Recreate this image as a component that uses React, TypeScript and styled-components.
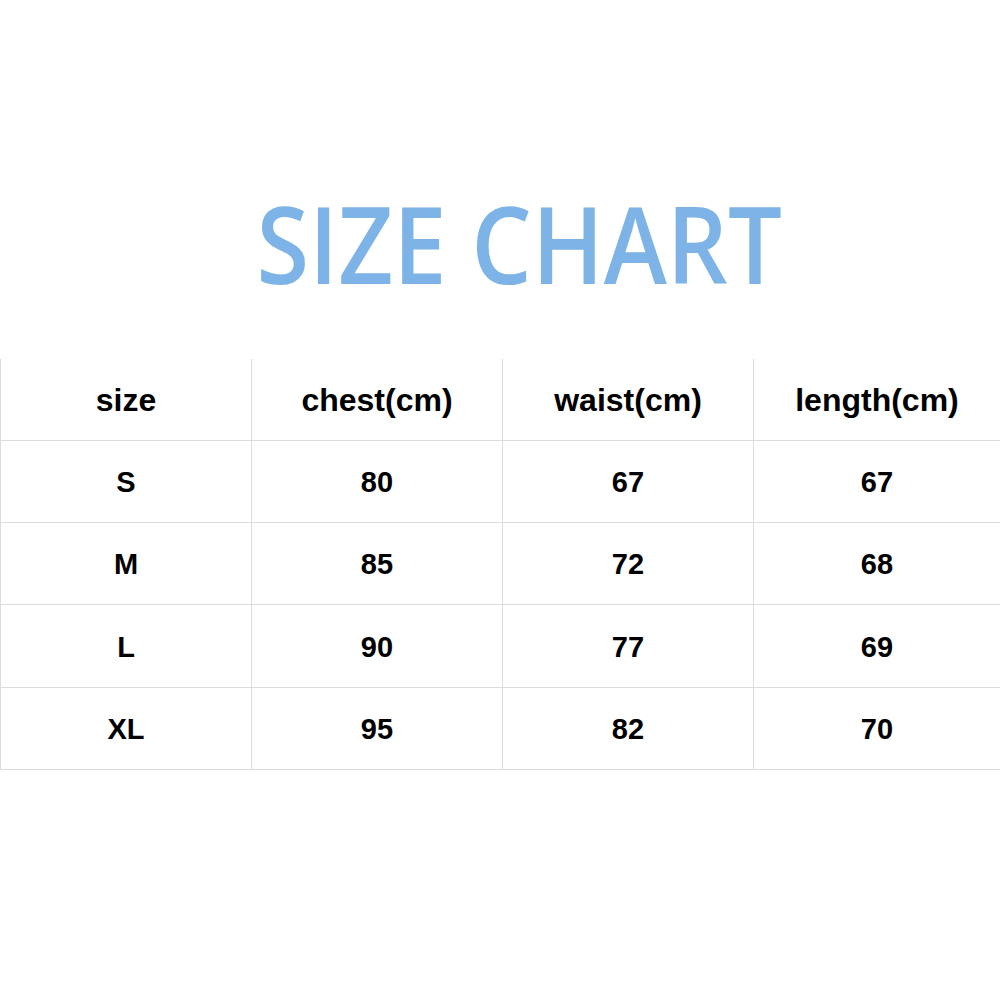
import styled, { createGlobalStyle } from "styled-components";

const GlobalStyle = createGlobalStyle`
  html, body {
    margin: 0;
    padding: 0;
    background: #ffffff;
  }
`;

type SizeRow = {
  size: string;
  chest: string;
  waist: string;
  length: string;
};

const rows: SizeRow[] = [
  { size: "S", chest: "80", waist: "67", length: "67" },
  { size: "M", chest: "85", waist: "72", length: "68" },
  { size: "L", chest: "90", waist: "77", length: "69" },
  { size: "XL", chest: "95", waist: "82", length: "70" },
];

const headers = ["size", "chest(cm)", "waist(cm)", "length(cm)"];

export default function App() {
  return (
    <>
      <GlobalStyle />
      <Page>
        <TitleBox>
          <Title>SIZE CHART</Title>
        </TitleBox>
        <Table>
          {headers.map((h) => (
            <Cell key={h} head>
              {h}
            </Cell>
          ))}
          {rows.map((r) => (
            <Row key={r.size} row={r} />
          ))}
        </Table>
      </Page>
    </>
  );
}

const Row = ({ row }: { row: SizeRow }) => (
  <>
    <Cell>{row.size}</Cell>
    <Cell>{row.chest}</Cell>
    <Cell>{row.waist}</Cell>
    <Cell>{row.length}</Cell>
  </>
);

const Page = styled.div`
  width: 1000px;
  height: 1000px;
  display: flex;
  flex-direction: column;
`;

const TitleBox = styled.div`
  height: 359px;
  box-sizing: border-box;
  padding: 189px 0 0 38px;
  display: flex;
  justify-content: center;
`;

const Title = styled.h1`
  margin: 0;
  font-family: "Open Sans", sans-serif;
  font-weight: 600;
  font-size: 107px;
  line-height: 1;
  color: #7db3e6;
  transform: scaleX(0.893);
  white-space: nowrap;
`;

const Table = styled.div`
  display: grid;
  grid-template-columns: 251px 251px 251px 1fr;
  grid-template-rows: 82px 82px 82px 83px 82px;
  border-left: 1px solid #dcdcdc;
`;

const Cell = styled.div<{ head?: boolean }>`
  display: flex;
  align-items: center;
  justify-content: center;
  box-sizing: border-box;
  border-bottom: 1px solid #dcdcdc;
  border-right: 1px solid #dcdcdc;
  font-family: "Liberation Sans", Arial, sans-serif;
  font-weight: 700;
  font-size: ${(p) => (p.head ? "32px" : "29px")};
  color: #000;
  padding-top: 2px;

  &:nth-child(4n) {
    border-right: none;
  }
`;
